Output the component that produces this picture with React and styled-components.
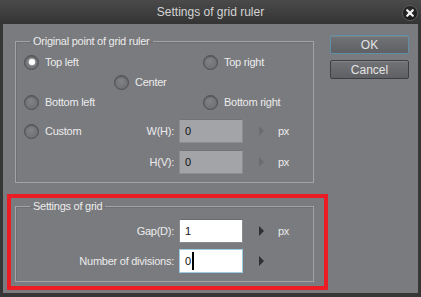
import React from "react";
import styled, { createGlobalStyle } from "styled-components";

const Global = createGlobalStyle`
  html, body { margin: 0; padding: 0; background: #2a2a2a; }
  body { font-family: "Liberation Sans", Arial, sans-serif; }
`;

const Window = styled.div`
  width: 421px;
  height: 297px;
  display: flex;
  flex-direction: column;
  box-sizing: border-box;
`;

const TitleBar = styled.div`
  height: 24px;
  flex: none;
  display: grid;
  grid-template-columns: 1fr auto 1fr;
  align-items: center;
  padding: 0 3px 0 3px;
  background: linear-gradient(#4a4a4a, #343434);
  color: #d4d4d4;
  font-size: 12px;
`;

const Title = styled.span`
  grid-column: 2;
`;

const Close = styled.div`
  grid-column: 3;
  justify-self: end;
  width: 16px;
  height: 16px;
  box-sizing: border-box;
  border-radius: 50%;
  border: 1px solid #5a5a5a;
  background: radial-gradient(circle at 50% 35%, #2e2e2e, #121212);
  display: flex;
  align-items: center;
  justify-content: center;
  margin-top: 1px;
`;

const Frame = styled.div`
  flex: 1;
  display: flex;
  background: #7a7b7f;
  border: solid #363636;
  border-width: 0 3px 4px 3px;
  padding: 11px 10px 3px 4px;
  gap: 2px;
`;

const LeftCol = styled.div`
  width: 321px;
  display: flex;
  flex-direction: column;
`;

const RightCol = styled.div`
  flex: 1;
  display: flex;
  flex-direction: column;
  gap: 6px;
`;

const Group = styled.fieldset`
  margin: 0;
  width: 299px;
  box-sizing: border-box;
  border: 1px solid #a2a3a6;
  box-shadow: inset 1px 1px 0 #6f7073;
  padding: ${p => p.$pad};
  margin-left: ${p => p.$ml || 0}px;
  color: #ececec;
  font-size: 11px;
  letter-spacing: -0.25px;
`;

const Legend = styled.legend`
  margin-left: 6px;
  padding: 0 3px;
  line-height: 13px;
  font-size: 11px;
  color: #ececec;
`;

const Highlight = styled.div`
  margin-top: 11px;
  border: 4px solid #ec1c24;
  padding: 2px 10px 4px 4px;
`;

const RadioGrid = styled.div`
  display: grid;
  grid-template-columns: 90px 89px auto;
  grid-auto-rows: 20px;
  align-items: center;
  margin-bottom: 7px;
`;

const RadioItem = styled.label`
  display: flex;
  align-items: center;
  gap: 6px;
  grid-column: ${p => p.$col};
  grid-row: ${p => p.$row};
  white-space: nowrap;
`;

const Circle = styled.span`
  width: 15px;
  height: 15px;
  box-sizing: border-box;
  border-radius: 50%;
  border: 1px solid #4e4f52;
  background: radial-gradient(circle at 45% 40%, #818286, #696a6e);
  box-shadow: inset 0 1px 1px rgba(0, 0, 0, 0.25);
  display: flex;
  align-items: center;
  justify-content: center;
  flex: none;

  &::after {
    content: "";
    display: ${p => (p.$checked ? "block" : "none")};
    width: 6px;
    height: 6px;
    border-radius: 50%;
    background: #ffffff;
    box-shadow: 0 0 2px #ffffff;
  }
`;

const Rows = styled.div`
  display: flex;
  flex-direction: column;
  gap: ${p => p.$gap}px;
`;

const FieldRow = styled.div`
  display: flex;
  align-items: center;
  height: 24px;
`;

const Lead = styled.div`
  width: 150px;
  display: flex;
  align-items: center;
  justify-content: space-between;
`;

const Input = styled.div`
  width: 64px;
  height: 24px;
  margin-left: 5px;
  box-sizing: border-box;
  display: flex;
  align-items: center;
  padding-left: 5px;
  font-size: 11px;
  letter-spacing: 0;
  color: #111;
  background: ${p => (p.$disabled ? "#a2a4a8" : "#ffffff")};
  border: 1px solid ${p => (p.$focus ? "#9ccbe4" : p.$disabled ? "#8c8d90" : "#8a8b8e")};
  border-top-color: ${p => (p.$focus ? "#9ccbe4" : p.$disabled ? "#727376" : "#6a6b6e")};
`;

const Caret = styled.span`
  width: 2px;
  height: 18px;
  background: #000;
  margin-left: 1px;
`;

const Arrow = styled.span`
  margin-left: 16px;
  width: 0;
  height: 0;
  border-style: solid;
  border-width: 5px 0 5px 5px;
  border-color: transparent transparent transparent ${p => (p.$disabled ? "#6b6c70" : "#2e2f31")};
`;

const Unit = styled.span`
  margin-left: 14px;
`;

const Button = styled.div`
  width: 79px;
  height: 19px;
  box-sizing: border-box;
  border: 1px solid ${p => (p.$default ? "#5f8ea6" : "#3e3f42")};
  border-radius: 2px;
  background: linear-gradient(#727376, #5f6063);
  box-shadow: inset 0 1px 0 rgba(255, 255, 255, 0.12);
  color: #e4e4e4;
  font-size: 12px;
  display: flex;
  align-items: center;
  justify-content: center;
`;

const Radio = ({ label, checked, col, row }) => (
  <RadioItem $col={col} $row={row}>
    <Circle $checked={checked} />
    {label}
  </RadioItem>
);

const Field = ({ radio, label, value, disabled, focus, unit }) => (
  <FieldRow>
    <Lead>
      {radio ? <Radio label={radio} /> : <span />}
      <span>{label}</span>
    </Lead>
    <Input $disabled={disabled} $focus={focus}>
      {value}
      {focus && <Caret />}
    </Input>
    <Arrow $disabled={disabled} />
    {unit && <Unit>{unit}</Unit>}
  </FieldRow>
);

export default function App() {
  return (
    <>
      <Global />
      <Window>
        <TitleBar>
          <Title>Settings of grid ruler</Title>
          <Close>
            <svg width="10" height="10" viewBox="0 0 10 10">
              <path d="M2.2 2.2 L7.8 7.8 M7.8 2.2 L2.2 7.8" stroke="#f2f2f2" strokeWidth="2.2" strokeLinecap="round" />
            </svg>
          </Close>
        </TitleBar>
        <Frame>
          <LeftCol>
            <Group $pad="4px 8px 8px 8px" $ml={8}>
              <Legend>Original point of grid ruler</Legend>
              <RadioGrid>
                <Radio label="Top left" checked col={1} row={1} />
                <Radio label="Top right" col={3} row={1} />
                <Radio label="Center" col={2} row={2} />
                <Radio label="Bottom left" col={1} row={3} />
                <Radio label="Bottom right" col={3} row={3} />
              </RadioGrid>
              <Rows $gap={7}>
                <Field radio="Custom" label="W(H):" value="0" disabled unit="px" />
                <Field label="H(V):" value="0" disabled unit="px" />
              </Rows>
            </Group>
            <Highlight>
              <Group $pad="6px 8px 8px 8px">
                <Legend>Settings of grid</Legend>
                <Rows $gap={6}>
                  <Field label="Gap(D):" value="1" unit="px" />
                  <Field label="Number of divisions:" value="0" focus />
                </Rows>
              </Group>
            </Highlight>
          </LeftCol>
          <RightCol>
            <Button $default>OK</Button>
            <Button>Cancel</Button>
          </RightCol>
        </Frame>
      </Window>
    </>
  );
}
